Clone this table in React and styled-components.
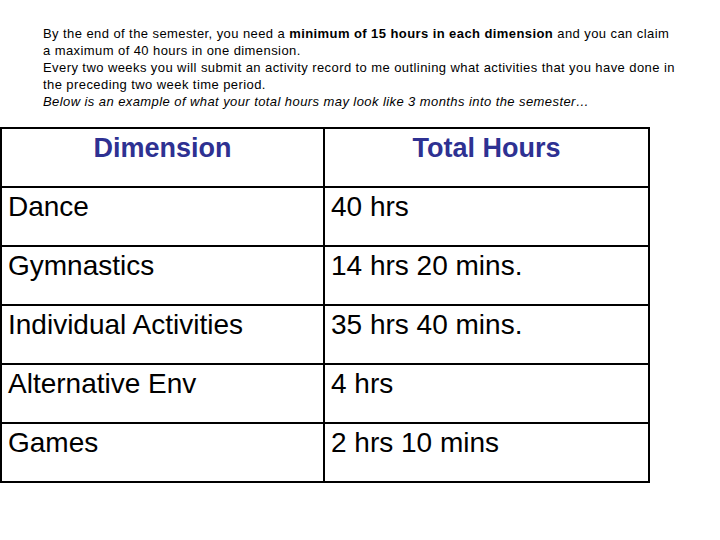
import styled, { createGlobalStyle } from 'styled-components';

const Global = createGlobalStyle`
  body {
    margin: 0;
    background: #fff;
    font-family: "Liberation Sans", Arial, sans-serif;
  }
`;

const Page = styled.div`
  width: 720px;
  height: 540px;
  padding-top: 25px;
  box-sizing: border-box;
`;

const Intro = styled.div`
  margin-left: 43px;
  width: 634px;
  font-size: 13px;
  line-height: 17px;
  letter-spacing: 0.42px;
  color: #000;

  b {
    font-weight: bold;
  }

  em {
    font-style: italic;
  }
`;

const Table = styled.table`
  margin-top: 17px;
  border-collapse: collapse;
  width: 648px;
  table-layout: fixed;
`;

const Cell = styled.td`
  border: 2px solid #000;
  height: 59px;
  box-sizing: border-box;
  vertical-align: top;
  padding: ${p => (p.head ? '4px' : '3px')} 6px 0;
  font-size: ${p => (p.head ? '27px' : '28px')};
  color: ${p => (p.head ? '#2e3192' : '#000')};
  font-weight: ${p => (p.head ? 'bold' : 'normal')};
  text-align: ${p => (p.head ? 'center' : 'left')};
  white-space: nowrap;
`;

const rows = [
  ['Dance', '40 hrs'],
  ['Gymnastics', '14 hrs 20 mins.'],
  ['Individual Activities', '35 hrs 40 mins.'],
  ['Alternative Env', '4 hrs'],
  ['Games', '2 hrs 10 mins'],
];

export default function App() {
  return (
    <Page>
      <Global />
      <Intro>
        By the end of the semester, you need a <b>minimum of 15 hours in each dimension</b> and you can claim a maximum of 40 hours in one dimension.
        <br />
        Every two weeks you will submit an activity record to me outlining what activities that you have done in the preceding two week time period.
        <br />
        <em>Below is an example of what your total hours may look like 3 months into the semester…</em>
      </Intro>
      <Table>
        <colgroup>
          <col style={{ width: 323 }} />
          <col style={{ width: 325 }} />
        </colgroup>
        <tbody>
          <tr>
            <Cell head>Dimension</Cell>
            <Cell head>Total Hours</Cell>
          </tr>
          {rows.map((r, i) => (
            <tr key={i}>
              <Cell>{r[0]}</Cell>
              <Cell>{r[1]}</Cell>
            </tr>
          ))}
        </tbody>
      </Table>
    </Page>
  );
}
